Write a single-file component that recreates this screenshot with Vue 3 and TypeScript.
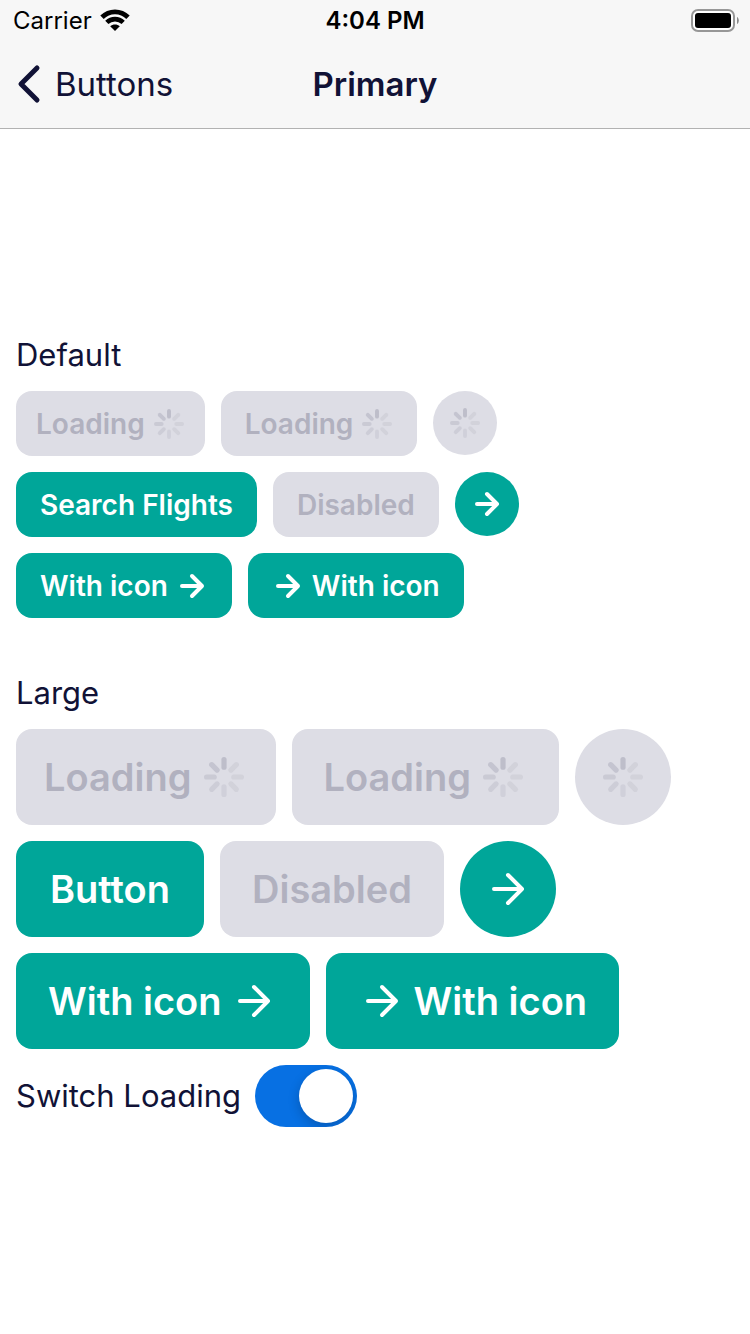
<script setup lang="ts">
import { ref } from 'vue'

interface ButtonSpec {
  label?: string
  icon?: 'leading' | 'trailing' | 'only'
  loading?: boolean
  disabled?: boolean
  compact?: boolean
  name?: string
}

interface Section {
  title: string
  size: 'small' | 'large'
  rows: ButtonSpec[][]
}

const loading = ref(true)

const makeRows = (primary: string): ButtonSpec[][] => [
  [
    { label: 'Loading', icon: 'trailing', loading: true, compact: true },
    { label: 'Loading', icon: 'trailing', loading: true },
    { icon: 'only', loading: true, name: 'Loading' },
  ],
  [
    { label: primary },
    { label: 'Disabled', disabled: true },
    { icon: 'only', name: 'Continue' },
  ],
  [
    { label: 'With icon', icon: 'trailing' },
    { label: 'With icon', icon: 'leading' },
  ],
]

const sections: Section[] = [
  { title: 'Default', size: 'small', rows: makeRows('Search Flights') },
  { title: 'Large', size: 'large', rows: makeRows('Button') },
]

const arrows = {
  small: { box: '0 0 32 32', path: 'M6 16H26M16 6L26 16L16 26' },
  large: { box: '0 0 48 48', path: 'M10 24H38M24 10L38 24L24 38' },
}

// Spokes run clockwise from the top
const spokes = [0.72, 0.26, 0.26, 0.26, 0.28, 0.36, 0.44, 0.56]

const isBusy = (b: ButtonSpec) => Boolean(b.loading && loading.value)
</script>

<template>
  <div class="screen">
    <header class="header">
      <div class="status">
        <div class="carrier">
          <span>Carrier</span>
          <svg class="wifi" viewBox="0 0 30 22" aria-hidden="true">
            <path d="M2 8.2C9.2 1 20.8 1 28 8.2" fill="none" stroke="#000" stroke-width="4.8" />
            <path d="M6.8 13.4C11.4 9 18.6 9 23.2 13.4" fill="none" stroke="#000" stroke-width="4.6" />
            <path d="M10.2 17.3C12.9 14.9 17.1 14.9 19.8 17.3L15 22Z" fill="#000" />
          </svg>
        </div>
        <span class="time">4:04 PM</span>
        <svg class="battery" viewBox="0 0 48 23" aria-hidden="true">
          <rect x="1" y="1" width="42" height="21" rx="6" fill="#fff" stroke="#979797" stroke-width="2" />
          <rect x="4" y="4" width="36" height="15" rx="3" fill="#000" />
          <path d="M46 8C48.4 9 48.4 14 46 15Z" fill="#8a8a8a" />
        </svg>
      </div>
      <nav class="nav">
        <a class="back" href="#">
          <svg class="chevron" viewBox="0 0 24 40" aria-hidden="true">
            <path d="M20 4L4 20L20 36" fill="none" stroke="currentColor" stroke-width="5" stroke-linecap="round" stroke-linejoin="round" />
          </svg>
          <span>Buttons</span>
        </a>
        <h1 class="title">Primary</h1>
      </nav>
    </header>

    <main class="content">
      <section v-for="s in sections" :key="s.title" class="section" :class="s.size">
        <h2 class="label">{{ s.title }}</h2>
        <div v-for="(row, r) in s.rows" :key="r" class="row">
          <button
            v-for="(b, i) in row"
            :key="i"
            type="button"
            class="btn"
            :class="{ round: b.icon === 'only', compact: b.compact, reverse: b.icon === 'leading' }"
            :disabled="b.disabled || isBusy(b)"
            :aria-label="b.name"
          >
            <span v-if="b.label">{{ b.label }}</span>
            <svg v-if="isBusy(b)" class="icon spinner" viewBox="0 0 48 48" aria-hidden="true">
              <line
                v-for="(o, n) in spokes"
                :key="n"
                x1="24" y1="6.6" x2="24" y2="14.2"
                stroke="#b1b1bf" stroke-width="5.2" stroke-linecap="round"
                :stroke-opacity="o"
                :transform="`rotate(${n * 45} 24 24)`"
              />
            </svg>
            <svg v-else-if="b.icon" class="icon" :viewBox="arrows[s.size].box" aria-hidden="true">
              <path :d="arrows[s.size].path" fill="none" stroke="currentColor" stroke-width="4" stroke-linecap="round" stroke-linejoin="round" />
            </svg>
          </button>
        </div>
      </section>

      <div class="switch-row">
        <label class="label" for="switch-loading">Switch Loading</label>
        <input id="switch-loading" v-model="loading" class="switch" type="checkbox" role="switch">
      </div>
    </main>
  </div>
</template>

<style>
body {
  margin: 0;
  background: #fff;
}
</style>

<style scoped>
.screen {
  display: flex;
  flex-direction: column;
  min-height: 100vh;
  background: #fff;
  color: #111236;
  font-family: Inter, "Liberation Sans", sans-serif;
}

.header {
  background: #f7f7f7;
  border-bottom: 1px solid #b2b2b2;
}

.status,
.nav {
  display: grid;
  grid-template-columns: 1fr auto 1fr;
  align-items: center;
}

.status {
  height: 40px;
  padding: 0 11px;
  color: #000;
  font-size: 24px;
}

.carrier {
  display: flex;
  align-items: center;
  gap: 8px;
  padding-left: 2px;
}

.wifi {
  width: 30px;
  height: 22px;
}

.time {
  font-weight: 600;
}

.battery {
  justify-self: end;
  width: 48px;
  height: 23px;
}

.nav {
  height: 88px;
  padding: 0 17px;
}

.back {
  display: flex;
  align-items: center;
  gap: 14px;
  color: inherit;
  font-size: 33px;
  text-decoration: none;
}

.chevron {
  width: 24px;
  height: 40px;
}

.title {
  grid-column: 2;
  margin: 0;
  font-size: 33px;
  font-weight: 600;
}

.content {
  display: flex;
  flex: 1;
  flex-direction: column;
  justify-content: center;
  padding: 0 16px;
}

.section {
  display: flex;
  flex-direction: column;
  gap: 16px;
}

.section.small {
  margin-bottom: 56px;
}

.label {
  margin: 0;
  padding-bottom: 2px;
  font-size: 31px;
  font-weight: 400;
  line-height: 37px;
}

.row {
  display: flex;
  flex-wrap: wrap;
  align-items: flex-start;
  gap: 16px;
}

.btn {
  display: flex;
  align-items: center;
  justify-content: center;
  gap: 8px;
  height: 65px;
  padding: 0 24px;
  border: 0;
  border-radius: 16px;
  background: #00a699;
  color: #fff;
  font-family: inherit;
  font-size: 28px;
  font-weight: 600;
  white-space: nowrap;
}

.btn:disabled {
  background: #dddde5;
  color: #b1b1bf;
}

.compact {
  padding: 0 20px;
}

.reverse {
  flex-direction: row-reverse;
}

.icon {
  flex: none;
  width: 32px;
  height: 32px;
}

.small .spinner {
  width: 36px;
  height: 36px;
  margin: -2px;
}

.round {
  width: 64px;
  height: 64px;
  padding: 0;
  border-radius: 50%;
}

.large .btn {
  min-width: 188px;
  height: 96px;
  padding: 0 32px;
  font-size: 38px;
}

.large .compact {
  padding: 0 28px;
}

.large .round {
  width: 96px;
  min-width: 0;
  padding: 0;
}

.large .icon {
  width: 48px;
  height: 48px;
}

.switch-row {
  display: flex;
  align-items: center;
  gap: 14px;
  margin-top: 16px;
}

.switch {
  display: flex;
  align-items: center;
  box-sizing: border-box;
  width: 102px;
  height: 62px;
  margin: 0;
  padding: 4px;
  overflow: hidden;
  border-radius: 31px;
  appearance: none;
  background: #0770e3;
}

.switch::before {
  width: 54px;
  height: 54px;
  border-radius: 50%;
  background: #fff;
  box-shadow: 0 4px 12px rgb(0 0 0 / 20%);
  content: "";
}

.switch:checked::before {
  margin-left: auto;
}

.switch:not(:checked) {
  background: #dddde5;
}
</style>
